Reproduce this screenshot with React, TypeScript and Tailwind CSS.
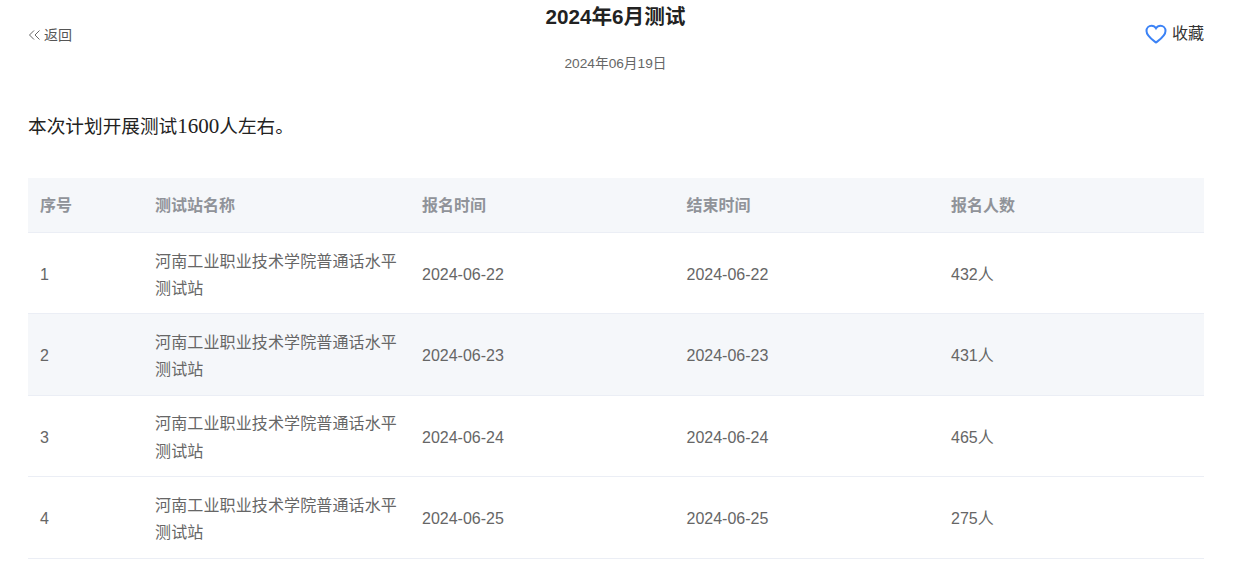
const rows = [
  { id: 1, start: "2024-06-22", end: "2024-06-22", count: "432人" },
  { id: 2, start: "2024-06-23", end: "2024-06-23", count: "431人" },
  { id: 3, start: "2024-06-24", end: "2024-06-24", count: "465人" },
  { id: 4, start: "2024-06-25", end: "2024-06-25", count: "275人" },
];

const sans = "font-['Liberation_Sans','Noto_Sans_CJK_SC',sans-serif]";

const App = () => {
  return (
    <div className={`pl-[28px] w-[1204px] h-[577px] overflow-hidden bg-white ${sans}`}>
      <div className="relative flex justify-between">
        <a className="flex items-center gap-[3px] mt-[26px] h-[18px] text-[14px] text-[#555]">
          <svg width="13" height="10" viewBox="0 0 13 10" fill="none" stroke="#666" strokeWidth="1">
            <path d="M6 0.500L1.500 5L6 9.500M11.500 0.500L7 5L11.500 9.500" />
          </svg>
          返回
        </a>
        <div className="text-center ml-[14px]">
          <h1 className="text-[20.670px] leading-[26px] mt-[4px] font-bold text-[#222]">2024年6月测试</h1>
          <p className="text-[13.700px] leading-[18px] mt-[25px] text-[#666]">2024年06月19日</p>
        </div>
        <a className="flex items-center gap-[5px] mt-[23px] h-[22px] text-[16px] text-[#333]">
          <svg width="22" height="20" viewBox="0 0 22 20" fill="none" stroke="#3b82f6" strokeWidth="2">
            <path d="M11 18.5C7 15.5 1.5 12 1.5 7C1.5 3.8 3.9 1.8 6.5 1.8C8.3 1.8 10 2.7 11 4.3C12 2.7 13.700 1.800 15.500 1.800C18.100 1.800 20.500 3.800 20.500 7C20.500 12 15 15.500 11 18.500Z" />
          </svg>
          收藏
        </a>
      </div>

      <p className="mt-[38px] text-[18.670px] leading-[30px] text-[#222]">
        本次计划开展测试<span className="text-[21px] font-['Liberation_Serif',serif]">1600</span>人左右。
      </p>

      <table className="mt-[36px] w-[1176px] table-fixed border-collapse text-[16px] text-[#666]">
        <colgroup>
          <col className="w-[115px]" />
          <col className="w-[267px]" />
          <col className="w-[264.500px]" />
          <col className="w-[264.500px]" />
          <col />
        </colgroup>
        <thead>
          <tr className="h-[54.500px] bg-[#f5f7fa] border-b border-[#ebeef5] text-[#909399] text-left">
            <th className="pl-[12px] pt-[2px] font-bold">序号</th>
            <th className="pl-[12px] pt-[2px] font-bold">测试站名称</th>
            <th className="pl-[12px] pt-[2px] font-bold">报名时间</th>
            <th className="pl-[12px] pt-[2px] font-bold">结束时间</th>
            <th className="pl-[12px] pt-[2px] font-bold">报名人数</th>
          </tr>
        </thead>
        <tbody>
          {rows.map((row) => (
            <tr key={row.id} className={`border-b border-[#ebeef5] ${row.id === 2 ? "bg-[#f5f7fa]" : "bg-white"}`}>
              <td className="pl-[12px] pt-[14.500px] pb-[11.500px]">{row.id}</td>
              <td className="px-[12px] pt-[14.500px] pb-[11.500px] leading-[27.2px] tracking-[0.13px]">河南工业职业技术学院普通话水平测试站</td>
              <td className="pl-[12px] pt-[14.500px] pb-[11.500px]">{row.start}</td>
              <td className="pl-[12px] pt-[14.500px] pb-[11.500px]">{row.end}</td>
              <td className="pl-[12px] pt-[14.500px] pb-[11.500px]">{row.count}</td>
            </tr>
          ))}
        </tbody>
      </table>
    </div>
  );
};

export default App;
